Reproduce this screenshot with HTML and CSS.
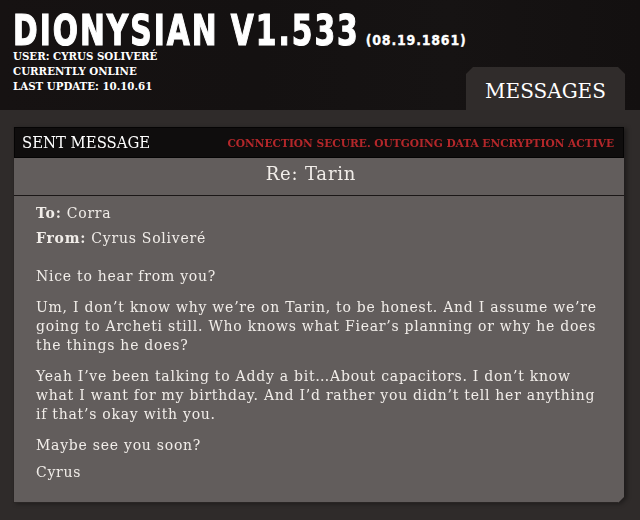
FILE: index.html
```html
<!DOCTYPE html>
<html lang="en">
<head>
<meta charset="utf-8">
<title>Dionysian v1.533 — Messages</title>
<link rel="stylesheet" href="styles.css">
</head>
<body>
<header class="top">
  <div class="identity">
    <h1 class="title"><span class="title-main">DIONYSIAN V1.533</span><span class="title-date">(08.19.1861)</span></h1>
    <ul class="meta">
      <li>USER: CYRUS SOLIVERÉ</li>
      <li>CURRENTLY ONLINE</li>
      <li>LAST UPDATE: 10.10.61</li>
    </ul>
  </div>
  <nav class="tab">MESSAGES</nav>
</header>
<main class="content">
  <section class="panel">
    <div class="panel-inner">
      <div class="panel-bar">
        <span class="bar-title">SENT MESSAGE</span>
        <span class="bar-status">CONNECTION SECURE. OUTGOING DATA ENCRYPTION ACTIVE</span>
      </div>
      <div class="subject">Re: Tarin</div>
      <div class="message">
        <p class="field"><strong>To:</strong> Corra</p>
        <p class="field field-last"><strong>From:</strong> Cyrus Soliveré</p>
        <p>Nice to hear from you?</p>
        <p>Um, I don’t know why we’re on Tarin, to be honest. And I assume we’re going to Archeti still. Who knows what Fiear’s planning or why he does the things he does?</p>
        <p>Yeah I’ve been talking to Addy a bit…About capacitors. I don’t know what I want for my birthday. And I’d rather you didn’t tell her anything if that’s okay with you.</p>
        <p class="para-wide">Maybe see you soon?</p>
        <p class="sign">Cyrus</p>
      </div>
    </div>
  </section>
</main>
</body>
</html>
```
FILE: styles.css
```css
* { box-sizing: border-box; }

html, body {
  margin: 0;
  padding: 0;
}

body {
  width: 640px;
  height: 520px;
  overflow: hidden;
  background: #2f2b2a;
  color: #f1ede9;
  font-family: "DejaVu Serif", serif;
}

.top {
  height: 110px;
  display: flex;
  justify-content: space-between;
  align-items: flex-end;
  padding: 0 15px 0 13px;
  background: linear-gradient(90deg, #161212 0%, #141111 40%, #161313 70%, #131010 100%);
}

.identity {
  align-self: flex-start;
  flex: 1 1 auto;
  min-width: 0;
}

.title {
  margin: 19.6px 0 0;
  height: 29.4px;
  display: flex;
  align-items: baseline;
  white-space: nowrap;
  font-weight: bold;
  color: #ffffff;
  font-family: "DejaVu Sans Condensed", "DejaVu Sans", sans-serif;
}

.title-main {
  display: inline-block;
  font-size: 33px;
  line-height: 28px;
  letter-spacing: 2px;
  transform: scaleY(1.3);
  transform-origin: 0 25.4px;
  -webkit-text-stroke: 0.9px #ffffff;
}

.title-date {
  margin-left: 6px;
  font-size: 14px;
  line-height: 14px;
  letter-spacing: 0.8px;
  -webkit-text-stroke: 0.3px #ffffff;
}

.meta {
  list-style: none;
  margin: 0;
  padding: 0;
  font-family: "DejaVu Serif Condensed", "DejaVu Serif", serif;
  font-weight: bold;
  font-size: 11.4px;
  line-height: 15px;
  color: #ffffff;
}

.tab {
  flex: 0 0 159px;
  width: 159px;
  height: 43px;
  padding-top: 12px;
  text-align: center;
  background: #302c2b;
  font-size: 20px;
  line-height: 24px;
  color: #ffffff;
  clip-path: polygon(7px 0, calc(100% - 7px) 0, 100% 7px, 100% 100%, 0 100%, 0 7px);
}

.content {
  padding: 17px 16px 0 13px;
}

.panel {
  filter: drop-shadow(3px 1px 2px rgba(0, 0, 0, 0.35));
}

.panel-inner {
  height: 376px;
  background: #625d5c;
  border-left: 1px solid #2a2625;
  border-bottom: 1px solid #2a2625;
  clip-path: polygon(0 0, 100% 0, 100% calc(100% - 6px), calc(100% - 6px) 100%, 0 100%);
}

.panel-bar {
  height: 31px;
  display: flex;
  justify-content: space-between;
  align-items: center;
  padding: 0 9px 0 7px;
  background: #0f0d0d;
  border: 1px solid #050404;
}

.bar-title {
  font-family: "DejaVu Serif Condensed", "DejaVu Serif", serif;
  font-size: 16.5px;
  color: #ffffff;
}

.bar-status {
  font-family: "DejaVu Serif Condensed", "DejaVu Serif", serif;
  font-weight: bold;
  font-size: 11.8px;
  color: #b3272a;
}

.subject {
  height: 38px;
  padding: 5px 16px 0 0;
  text-align: center;
  font-size: 18px;
  line-height: 22px;
  letter-spacing: 0.8px;
  border-bottom: 1px solid #1b1717;
}

.message {
  padding: 8px 18px 0 22px;
  font-size: 14px;
  line-height: 19px;
  letter-spacing: 0.75px;
}

.message p {
  margin: 0 0 12px;
}

.message .field {
  margin-bottom: 6px;
}

.message .field-last {
  margin-bottom: 19px;
}

.message .para-wide {
  margin-top: 1px;
  margin-bottom: 8px;
}

strong {
  font-weight: bold;
}
```
